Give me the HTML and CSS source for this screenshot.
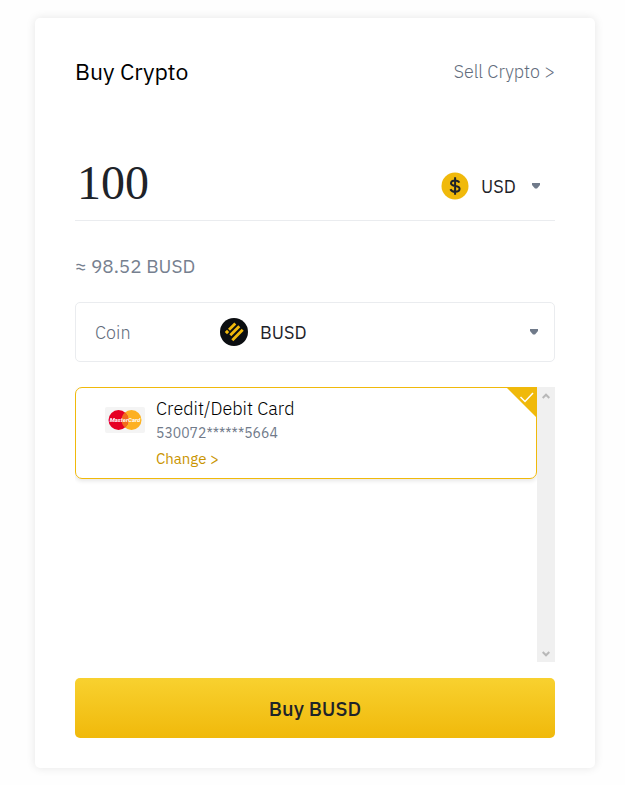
FILE: index.html
```html
<!DOCTYPE html>
<html lang="en">
<head>
    <meta charset="UTF-8">
    <meta name="viewport" content="width=device-width, initial-scale=1.0">
    <title>Buy Crypto</title>
    <link rel="stylesheet" href="styles.css">
</head>
<body>
    <form class="card">
        <header class="card-header">
            <h1>Buy Crypto</h1>
            <a href="#sell" class="sell-link">Sell Crypto &gt;</a>
        </header>

        <div class="amount-row">
            <input type="text" class="amount" name="amount" value="100" inputmode="decimal" aria-label="Amount">
            <label class="currency" for="currency">
                <svg class="coin-icon" viewBox="0 0 28 28" aria-hidden="true">
                    <circle cx="14" cy="14" r="13.500" fill="#f0b90b"/>
                    <path d="M18.300 10.600C17.600 9.200 16.200 8.500 14.200 8.500c-2.600 0-4.200 1.100-4.200 2.800 0 4.100 8.600 1.300 8.600 5.500 0 1.800-1.700 2.900-4.400 2.900-2.300 0-4-.8-4.800-2.500M14.100 5.200v17.600" fill="none" stroke="#1e2329" stroke-width="2"/>
                </svg>
                <span class="select-wrap">
                    <select id="currency" name="currency" aria-label="Currency">
                        <option>USD</option>
                    </select>
                    <svg class="caret" viewBox="0 0 8 6" aria-hidden="true"><path d="M0 0h8v2L5 5.500H3L0 2z"/></svg>
                </span>
            </label>
        </div>

        <p class="estimate">≈ 98.52 BUSD</p>

        <div class="coin-box">
            <label class="coin-label" for="coin">Coin</label>
            <svg class="coin-icon" viewBox="0 0 28 28" aria-hidden="true">
                <circle cx="14" cy="14" r="14" fill="#0b0e11"/>
                <g stroke="#f0b90b" stroke-width="2.800">
                    <path d="M9 11.800l6.300-6.300M10.300 17.300l9-9M12.300 22.200l10.400-10.400"/>
                </g>
                <path d="M7 11.800l2.200 2.200L7 16.200 4.800 14z" fill="#f0b90b"/>
            </svg>
            <span class="select-wrap">
                <select id="coin" name="coin">
                    <option>BUSD</option>
                </select>
                <svg class="caret" viewBox="0 0 8 6" aria-hidden="true"><path d="M0 0h8v2L5 5.500H3L0 2z"/></svg>
            </span>
        </div>

        <div class="methods">
            <div class="method-list">
                <div class="method">
                    <input type="radio" class="method-radio" id="method-card" name="method" checked>
                    <svg class="card-logo" viewBox="0 0 40 26" aria-hidden="true">
                        <rect width="40" height="26" rx="2" fill="#f4f4f4"/>
                        <circle cx="26.500" cy="13" r="10" fill="#fdb022"/>
                        <circle cx="13.500" cy="13" r="10" fill="#e60023"/>
                        <path d="M20 5.400a10 10 0 0 1 0 15.200a10 10 0 0 1 0-15.200z" fill="#f26b1d"/>
                        <text x="20" y="15" text-anchor="middle" class="card-logo-text">MasterCard</text>
                    </svg>
                    <div class="method-info">
                        <label for="method-card" class="method-name">Credit/Debit Card</label>
                        <span class="method-number">530072******5664</span>
                        <a href="#change" class="change-link">Change &gt;</a>
                    </div>
                    <svg class="method-check" viewBox="0 0 31 31" aria-hidden="true">
                        <path d="M0 0h31v31z" fill="#f0b90b"/>
                        <path d="M14.500 10l4.500 4.500 8-8.500" fill="none" stroke="#fff" stroke-width="1.500"/>
                    </svg>
                </div>
            </div>
            <div class="scroll-track">
                <svg viewBox="0 0 8 6" aria-hidden="true"><path d="M.7 5L4 1.700 7.300 5"/></svg>
                <svg viewBox="0 0 8 6" aria-hidden="true"><path d="M.7 1L4 4.300 7.300 1"/></svg>
            </div>
        </div>

        <button type="submit" class="buy-button">Buy BUSD</button>
    </form>
</body>
</html>
```
FILE: styles.css
```css
* {
    box-sizing: border-box;
}
body {
    margin: 0;
    padding: 18px 30px 16px 35px;
    font-family: "IBM Plex Sans", Roboto, sans-serif;
    background: #fefefe;
    color: #1e2329;
}
.card {
    padding: 30px 40px;
    background: #fff;
    border-radius: 5px;
    box-shadow: 0 0 10px rgba(0, 0, 0, 0.1);
}
.card-header {
    display: flex;
    align-items: center;
    justify-content: space-between;
    height: 46px;
}
h1 {
    margin: 0;
    font-size: 23px;
    font-weight: 400;
    color: #000;
}
a {
    text-decoration: none;
}
.sell-link {
    font-size: 18px;
    font-weight: 300;
    color: #626c7c;
}
.amount-row {
    display: flex;
    align-items: center;
    margin-top: 57px;
    padding-bottom: 7px;
    border-bottom: 1px solid #eaecef;
}
.amount {
    flex: 1;
    min-width: 0;
    height: 62px;
    padding: 0 2px;
    border: none;
    outline: none;
    background: none;
    font-family: "Liberation Serif", serif;
    font-size: 48px;
    color: #1e2329;
}
.currency {
    display: flex;
    align-items: center;
    gap: 12px;
    padding: 8px 15px 0 0;
}
.coin-icon {
    flex: none;
    width: 28px;
    height: 28px;
}
/* select and its caret share one grid cell */
.select-wrap {
    display: grid;
    align-items: center;
}
.select-wrap > * {
    grid-area: 1 / 1;
}
select {
    appearance: none;
    padding: 0 24px 0 0;
    border: none;
    outline: none;
    background: none;
    font-family: inherit;
    font-size: 18px;
    font-weight: 400;
    color: #1e2329;
}
.caret {
    justify-self: end;
    width: 8px;
    height: 6px;
    fill: #707a8a;
    pointer-events: none;
}
.estimate {
    margin: 33px 0 24px;
    font-size: 19px;
    line-height: 24px;
    color: #76808f;
}
.coin-box {
    display: flex;
    align-items: center;
    gap: 12px;
    height: 60px;
    padding: 0 16px 0 19px;
    border: 1px solid #eaecef;
    border-radius: 5px;
}
.coin-label {
    width: 113px;
    font-size: 18px;
    font-weight: 300;
    color: #626c7c;
}
.coin-box .select-wrap {
    flex: 1;
}
.methods {
    display: flex;
    height: 275px;
    margin-top: 25px;
}
.method-list {
    flex: 1;
    overflow: hidden;
}
.method {
    position: relative;
    display: flex;
    gap: 11px;
    height: 92px;
    padding: 8px 29px;
    border: 1px solid #f0b90b;
    border-radius: 7px;
    box-shadow: 0 2px 4px rgba(0, 0, 0, 0.1);
}
.method-radio {
    position: absolute;
    opacity: 0;
}
.card-logo {
    width: 40px;
    height: 26px;
    margin-top: 11px;
}
.card-logo-text {
    font-family: Roboto, sans-serif;
    font-size: 6px;
    font-weight: 700;
    font-style: italic;
    fill: #fff;
}
.method-info {
    display: flex;
    flex-direction: column;
    align-items: flex-start;
    line-height: 25px;
}
.method-name {
    font-size: 18px;
    font-weight: 300;
    color: #000;
}
.method-number {
    font-size: 14px;
    color: #707a8a;
}
.change-link {
    font-size: 15px;
    color: #c99400;
}
.method-check {
    position: absolute;
    top: -1px;
    right: -1px;
    width: 31px;
    height: 31px;
}
.scroll-track {
    display: flex;
    flex-direction: column;
    align-items: center;
    justify-content: space-between;
    width: 18px;
    padding: 6px 0 5px;
    background: #f0f0f0;
}
.scroll-track svg {
    width: 8px;
    height: 6px;
    fill: none;
    stroke: #b8b8b8;
    stroke-width: 2;
}
.buy-button {
    display: block;
    width: 100%;
    height: 60px;
    margin-top: 16px;
    border: none;
    border-radius: 5px;
    background: linear-gradient(#f8d12f, #f0b90b);
    font-family: inherit;
    font-size: 20px;
    font-weight: 500;
    color: #1e2329;
    cursor: pointer;
}
```
